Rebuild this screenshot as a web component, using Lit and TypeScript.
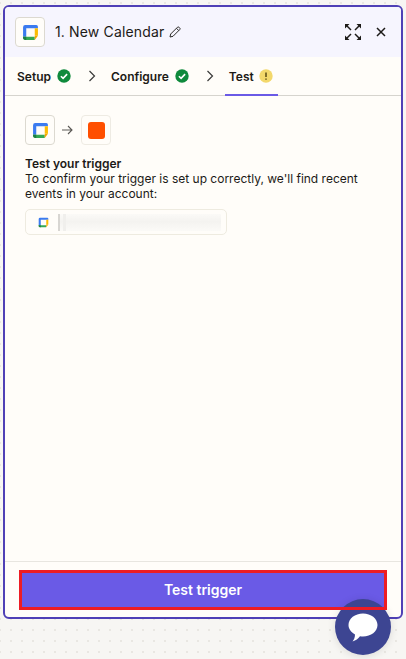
import { LitElement, html, css, svg } from "lit";
import { customElement } from "lit/decorators.js";

const cal = (s: number) => html`<svg width=${s} height=${s} viewBox="0 0 16 16">
  <path d="M3 1h10.500A1.500 1.500 0 0 1 15 2.500V4H4v8H1V3a2 2 0 0 1 2-2z" fill="#3b7bf0"/>
  <path d="M12 4h3v7h-3z" fill="#fbbc04"/>
  <path d="M4 12h8v3H3a2 2 0 0 1-2-2v-1z" fill="#34a853"/>
  <path d="M12 11h3l-3 4z" fill="#f2a600"/>
  <path d="M1 12h3v3H3a2 2 0 0 1-2-2z" fill="#1e7e45"/>
</svg>`;

const check = () => html`<svg class="st" width="14" height="14" viewBox="0 0 14 14">
  <circle cx="7" cy="7" r="6.700" fill="#0f8a3c"/>
  <path d="M3.900 7.200l2.200 2.200 4-4.300" fill="none" stroke="#fff" stroke-width="1.600"/>
</svg>`;

const chev = () => html`<svg class="chev" width="8" height="12" viewBox="0 0 8 12">
  <path d="M1.500 1l5 5-5 5" fill="none" stroke="#3a3a3a" stroke-width="1.200"/>
</svg>`;

@customElement("app-root")
export class AppRoot extends LitElement {
  static styles = css`
    :host {
      display: block;
      position: relative;
      height: 659px;
      overflow: hidden;
      box-sizing: border-box;
      padding: 5px 3px 40px 3px;
      font-family: Inter, "Liberation Sans", sans-serif;
      color: #1c1a17;
      background-color: #f7f6f3;
      background-image: radial-gradient(circle at 1px 1px, #e9e7e2 0.800px, transparent 1px);
      background-size: 11px 11px;
      background-position: -1px 2px;
    }
    .panel {
      box-sizing: border-box;
      width: 400px;
      height: 614px;
      border: 2px solid #4f40b6;
      border-radius: 6px;
      background: #fffdf9;
      display: flex;
      flex-direction: column;
      overflow: hidden;
    }
    .head {
      height: 50px;
      background: #f6f5fe;
      display: flex;
      align-items: center;
      padding: 0 15px 0 10px;
      flex: none;
    }
    .logo {
      width: 30px;
      height: 30px;
      box-sizing: border-box;
      border: 1px solid #dcd9d0;
      border-radius: 4px;
      background: #fffdf9;
      display: flex;
      align-items: center;
      justify-content: center;
      flex: none;
    }
    .title {
      margin-left: 10px;
      font-size: 14px;
      line-height: 20px;
      letter-spacing: 0.150px;
    }
    .pen { margin-left: 5px; }
    .spacer { flex: 1; }
    .close { margin-left: 15px; }
    .tabs {
      height: 39px;
      flex: none;
      box-sizing: border-box;
      border-bottom: 1px solid #d6d4ce;
      display: flex;
      padding: 0 0 0 12px;
      font-size: 12px;
      font-weight: 600;
    }
    .tab {
      display: flex;
      align-items: center;
      gap: 6px;
      height: 39px;
      box-sizing: border-box;
      padding-bottom: 1px;
    }
    .tab.active {
      border-bottom: 2px solid #6a5ae6;
      padding: 1px 5px 0 4px;
      margin-left: -4px;
      gap: 5px;
    }
    .chev { margin: 0 15px 0 17px; align-self: center; flex: none; }
    .st { flex: none; }
    .body {
      flex: 1;
      padding: 19px 20px 0 20px;
      min-height: 0;
    }
    .flow { display: flex; align-items: center; }
    .arrow { margin: 0 8px 0 7px; }
    .tile {
      width: 30px;
      height: 30px;
      box-sizing: border-box;
      border: 1px solid #dcd9d0;
      border-radius: 4px;
      display: flex;
      align-items: center;
      justify-content: center;
    }
    .tile.light { border-color: #eeebe3; }
    .orange { width: 17px; height: 17px; border-radius: 3px; background: #ff4f00; }
    .text { margin: 11px 0 0 0; font-size: 12px; line-height: 15px; width: 345px; }
    .text b { display: block; font-weight: 600; }
    .acct {
      margin-top: 8px;
      width: 202px;
      height: 26px;
      box-sizing: border-box;
      border: 1px solid #eeebe0;
      border-radius: 5px;
      display: flex;
      align-items: center;
      padding: 0 4px 0 12px;
    }
    .blur {
      margin-left: 9px;
      width: 163px;
      height: 17px;
      background:
        linear-gradient(90deg, #d8d6d2 0 2px, transparent 2px 5px, #f0efec 5px 8px, transparent 8px),
        linear-gradient(180deg, #fbfaf7, #f4f3f0 45%, #fbfaf7);
      filter: blur(0.500px);
    }
    .foot {
      flex: none;
      height: 56px;
      box-sizing: border-box;
      border-top: 1px solid #e8e6e0;
      padding: 8px 14px;
    }
    .btn {
      position: relative;
      display: flex;
      align-items: center;
      justify-content: center;
      width: 100%;
      height: 40px;
      box-sizing: border-box;
      border: none;
      background: #6a5ae6;
      color: #fff;
      font-family: inherit;
      font-size: 14px;
      font-weight: 600;
      padding: 0 0 1px 0;
    }
    .btn::after {
      content: "";
      position: absolute;
      inset: 0;
      z-index: 2;
      box-sizing: border-box;
      border: 3px solid #ed1c24;
    }
    .chat {
      position: absolute;
      z-index: 1;
      left: 335px;
      top: 599px;
      width: 56px;
      height: 56px;
      border-radius: 50%;
      background: #3d4592;
      box-shadow: 0 1px 8px rgba(0,0,0,.12);
      display: flex;
      align-items: center;
      justify-content: center;
    }
  `;

  render() {
    return html`
      <div class="panel">
        <div class="head">
          <div class="logo">${cal(17)}</div>
          <div class="title">1. New Calendar</div>
          <svg class="pen" width="12" height="12" viewBox="0 0 12 12">
            <path d="M1 11l.700-3L8.500 1.200a1 1 0 0 1 1.400 0l.900.900a1 1 0 0 1 0 1.400L4 10.300z M7.500 2.300l2.200 2.200" fill="none" stroke="#2a2825" stroke-width="1"/>
          </svg>
          <div class="spacer"></div>
          <svg width="16" height="16" viewBox="0 0 16 16">
            ${svg`<path d="M0 0h4.500L0 4.500z M16 0v4.500L11.500 0z M0 16v-4.500L4.500 16z M16 16h-4.500L16 11.500z" fill="#1c1a17"/>
            <path d="M2 2l4 4 M14 2l-4 4 M2 14l4-4 M14 14l-4-4" stroke="#1c1a17" stroke-width="1.500" fill="none"/>`}
          </svg>
          <svg class="close" width="10" height="10" viewBox="0 0 10 10" fill="none" stroke="#1c1a17" stroke-width="1.500">
            ${svg`<path d="M1 1l8 8 M9 1l-8 8"/>`}
          </svg>
        </div>
        <div class="tabs">
          <div class="tab">Setup ${check()}</div>
          ${chev()}
          <div class="tab">Configure ${check()}</div>
          ${chev()}
          <div class="tab active">Test
            <svg class="st" width="14" height="14" viewBox="0 0 14 14">
              <circle cx="7" cy="7" r="6.700" fill="#f3d86b"/>
              <path d="M7 3.500v4.500 M7 9.500v1.300" stroke="#5a4a10" stroke-width="1.500" fill="none"/>
            </svg>
          </div>
        </div>
        <div class="body">
          <div class="flow">
            <div class="tile">${cal(17)}</div>
            <svg class="arrow" width="11" height="10" viewBox="0 0 11 10" fill="none" stroke="#5c5a56" stroke-width="1.100">
              ${svg`<path d="M0 5h10 M6 1l4 4-4 4"/>`}
            </svg>
            <div class="tile light"><div class="orange"></div></div>
          </div>
          <p class="text"><b>Test your trigger</b>To confirm your trigger is set up correctly, we'll find recent events in your account:</p>
          <div class="acct">${cal(11)}<div class="blur"></div></div>
        </div>
        <div class="foot"><button class="btn">Test trigger</button></div>
      </div>
      <div class="chat">
        <svg width="30" height="30" viewBox="0 0 30 30">
          <path d="M15 1.500C23 1.500 29.500 6.500 29.500 13 29.500 19.500 23 24.500 15 24.500c-1 0-2-.1-3-.3C10 26.500 8 28.500 4.500 29.500c1.500-2 2.500-4 2.500-7C3 20 .5 17 .5 13 .5 6.500 7 1.500 15 1.500z" fill="#fff"/>
        </svg>
      </div>
    `;
  }
}
